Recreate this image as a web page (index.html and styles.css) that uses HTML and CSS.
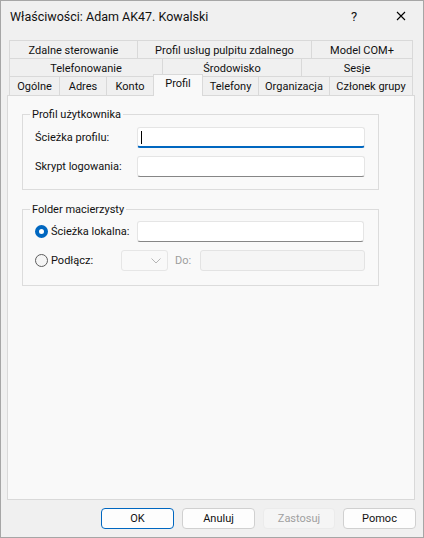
FILE: index.html
```html
<!DOCTYPE html>
<html lang="pl">
<head>
<meta charset="utf-8">
<title>Właściwości</title>
<link rel="stylesheet" href="styles.css">
</head>
<body>
<div class="window">
  <div class="titlebar">
    <span class="title">Właściwości: Adam AK47. Kowalski</span>
    <span class="help">?</span>
    <span class="close"><svg width="10" height="10" viewBox="0 0 10 10"><path d="M1 1L9 9M9 1L1 9" stroke="#000" stroke-width="1.1" fill="none"/></svg></span>
  </div>
  <div class="tabs">
    <div class="tabrow">
      <div class="tab w128">Zdalne sterowanie</div>
      <div class="tab w174">Profil usług pulpitu zdalnego</div>
      <div class="tab w102 last">Model COM+</div>
    </div>
    <div class="tabrow">
      <div class="tab w153">Telefonowanie</div>
      <div class="tab w139">Środowisko</div>
      <div class="tab w112 last">Sesje</div>
    </div>
    <div class="tabrow row3">
      <div class="tab w50">Ogólne</div>
      <div class="tab w47">Adres</div>
      <div class="tab w47">Konto</div>
      <div class="tab w50 selected">Profil</div>
      <div class="tab w55 noleft">Telefony</div>
      <div class="tab w71">Organizacja</div>
      <div class="tab w84 last">Członek grupy</div>
    </div>
  </div>
  <div class="panel">
    <fieldset class="group g1">
      <legend>Profil użytkownika</legend>
      <div class="row first">
        <span class="label">Ścieżka profilu:</span>
        <div class="input focus"><span class="caret"></span></div>
      </div>
      <div class="row">
        <span class="label">Skrypt logowania:</span>
        <div class="input"></div>
      </div>
    </fieldset>
    <fieldset class="group g2">
      <legend>Folder macierzysty</legend>
      <div class="row first">
        <span class="radio checked"></span>
        <span class="rlabel w86">Ścieżka lokalna:</span>
        <div class="input wide"></div>
      </div>
      <div class="row">
        <span class="radio"></span>
        <span class="rlabel w70">Podłącz:</span>
        <div class="combo"><svg width="10" height="6" viewBox="0 0 10 6"><path d="M0.5 0.5L5 5L9.5 0.5" stroke="#b5b5b5" fill="none" stroke-width="1"/></svg></div>
        <span class="do">Do:</span>
        <div class="input disabled"></div>
      </div>
    </fieldset>
  </div>
  <div class="buttons">
    <div class="btn default">OK</div>
    <div class="btn">Anuluj</div>
    <div class="btn off">Zastosuj</div>
    <div class="btn">Pomoc</div>
  </div>
</div>
</body>
</html>
```

FILE: styles.css
```css
* { box-sizing: border-box; }
html, body { margin: 0; padding: 0; background: #f0f0f0; }
body {
  font-family: Roboto, "Liberation Sans", Arial, sans-serif;
  font-size: 11px;
  color: #111;
}
.window {
  width: 424px;
  height: 538px;
  border: 1px solid #a6a6a6;
  background: #f0f0f0;
  display: flex;
  flex-direction: column;
}
.titlebar {
  height: 30px;
  display: flex;
  align-items: center;
  padding-left: 9px;
  font-size: 12.5px;
}
.title { flex: 1; }
.help { width: 14px; margin-right: 31px; font-size: 13px; }
.close { width: 10px; height: 10px; margin-right: 17px; display: flex; }
.tabs {
  margin-top: 9px;
  margin-left: 8px;
  display: flex;
  flex-direction: column;
}
.tabrow { display: flex; height: 18px; }
.tabrow.row3 { height: 19px; }
.tab {
  border-top: 1px solid #d9d9d9;
  border-left: 1px solid #d9d9d9;
  background: #f0f0f0;
  display: flex;
  align-items: center;
  justify-content: center;
  white-space: nowrap;
  padding-top: 1px;
}
.tab.last { border-right: 1px solid #d9d9d9; }
.tab.noleft { border-left: none; }
.tab.selected {
  border-right: 1px solid #d9d9d9;
  background: #f9f9f9;
  margin-top: -2px;
  height: 22px;
  align-items: flex-start;
  padding-top: 2px;
  position: relative;
  z-index: 1;
}
.w128 { width: 128px; } .w174 { width: 174px; } .w102 { width: 102px; }
.w153 { width: 153px; } .w139 { width: 139px; } .w112 { width: 112px; }
.w50 { width: 50px; } .w47 { width: 47px; } .w55 { width: 55px; }
.w71 { width: 71px; } .w84 { width: 84px; }
.panel {
  margin-left: 6px;
  width: 408px;
  height: 405px;
  border: 1px solid #d9d9d9;
  background: #f9f9f9;
  padding-top: 11px;
  padding-left: 14px;
}
.group {
  margin: 0;
  width: 357px;
  border: 1px solid #dcdcdc;
  padding: 0 0 0 12px;
  min-width: 0;
}
.group legend {
  margin-left: -5px;
  padding: 0 2px;
  line-height: 15px;
}
.g1 { padding-bottom: 12px; }
.g2 { margin-top: 12px; padding-bottom: 14px; }
.row { display: flex; align-items: center; height: 21px; margin-top: 8px; }
.row.first { margin-top: 5px; }
.g2 .row.first { margin-top: 4px; }
.label { width: 102px; }
.input {
  width: 228px;
  height: 21px;
  background: #fff;
  border: 1px solid #e5e5e5;
  border-bottom-color: #868686;
  border-radius: 3px;
  display: flex;
  align-items: center;
}
.input.focus { border-bottom: 2px solid #0067c0; }
.caret { width: 1px; height: 13px; background: #000; margin-left: 3px; margin-top: 1px; }
.input.wide { width: 227px; }
.input.disabled {
  width: 165px;
  background: #f5f5f5;
  border-color: #e3e3e3;
}
.radio {
  width: 13px;
  height: 13px;
  border-radius: 50%;
  border: 1px solid #5c5c5c;
  background: #f5f5f5;
  margin-right: 3px;
}
.radio.checked {
  border: 4px solid #0067c0;
  background: #fff;
}
.rlabel.w86 { width: 86px; }
.rlabel.w70 { width: 70px; }
.combo {
  width: 47px;
  height: 21px;
  border: 1px solid #e6e6e6;
  border-radius: 3px;
  background: #f9f9f9;
  display: flex;
  align-items: center;
  justify-content: flex-end;
  padding-right: 6px;
}
.do { color: #9d9d9d; width: 32px; padding-left: 7px; }
.buttons {
  display: flex;
  justify-content: flex-end;
  gap: 8px;
  margin-top: 8px;
  margin-right: 7px;
}
.btn {
  width: 73px;
  height: 21px;
  border: 1px solid #d0d0d0;
  border-radius: 4px;
  background: #fdfdfd;
  display: flex;
  align-items: center;
  justify-content: center;
}
.btn.default { border-color: #0067c0; }
.btn.off { width: 72px; background: #f5f5f5; border-color: #ebebeb; color: #a0a0a0; }
```
